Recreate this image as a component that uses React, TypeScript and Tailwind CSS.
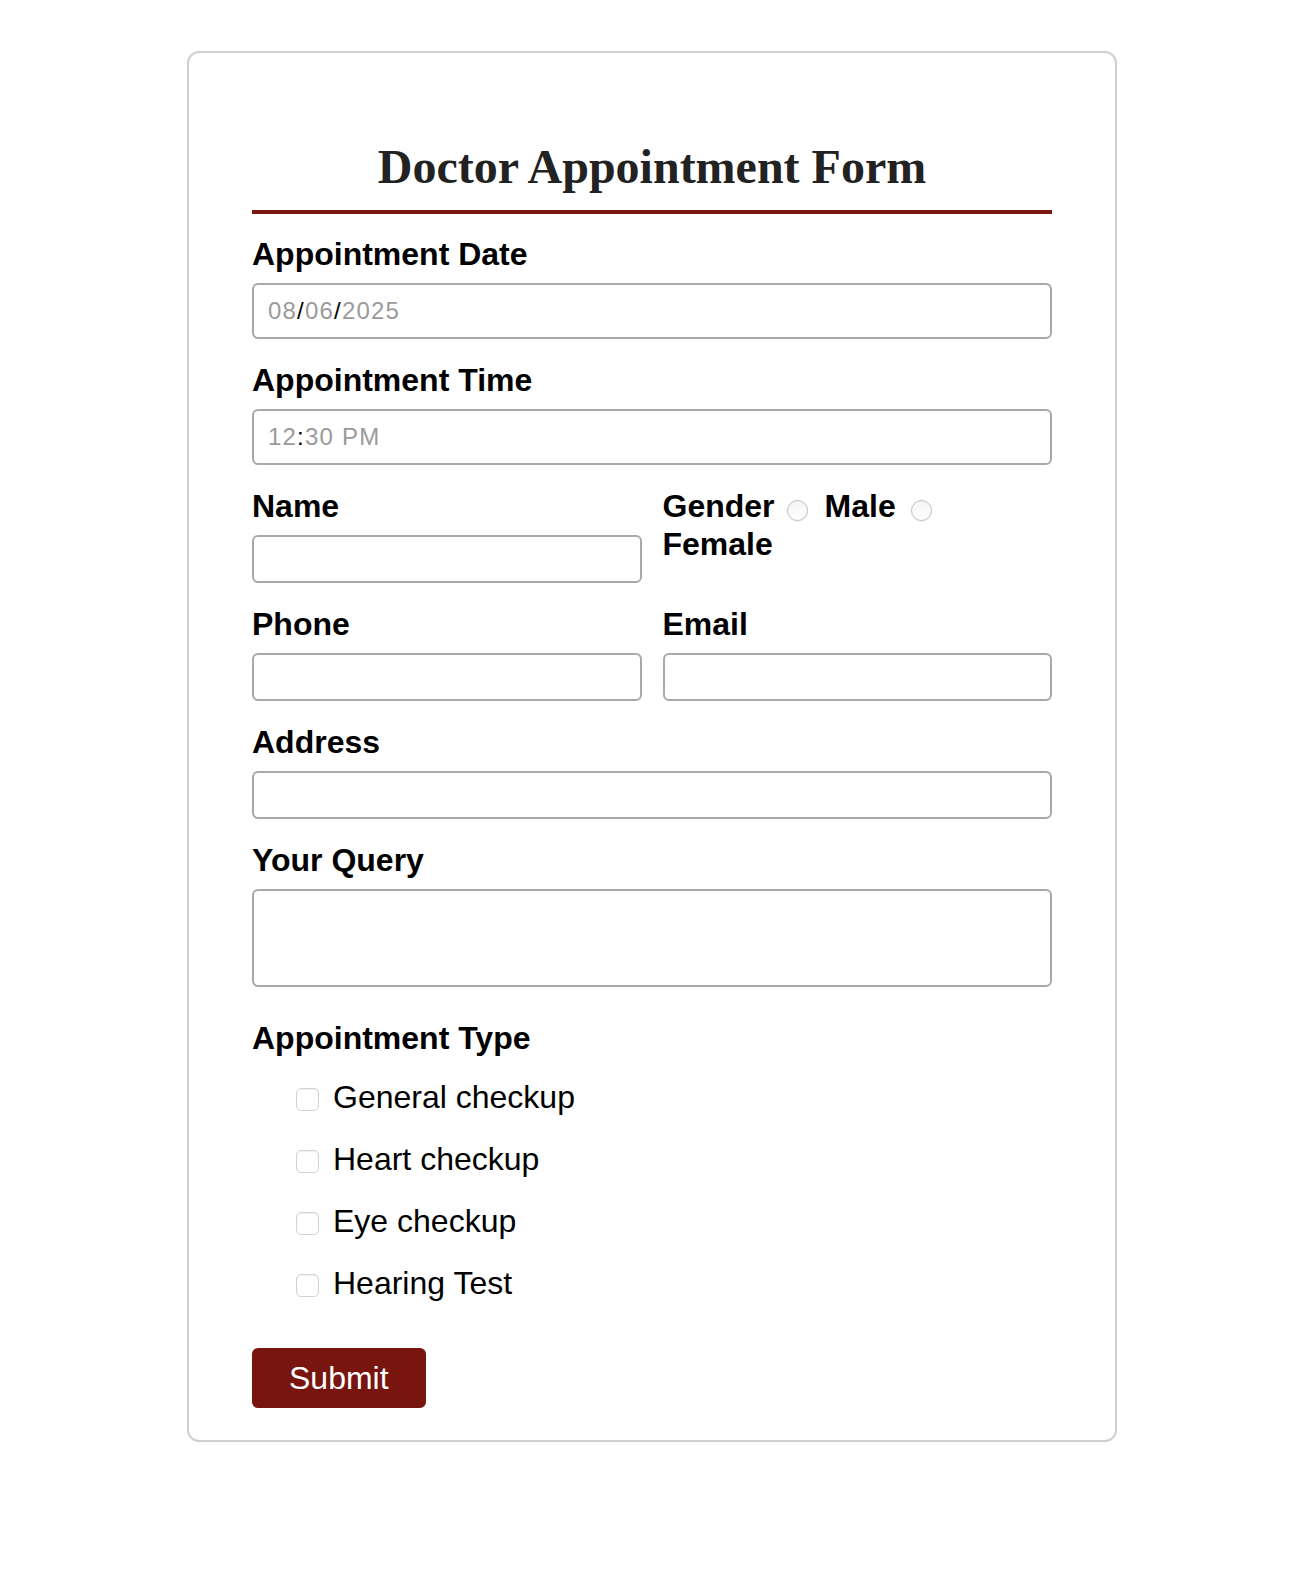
import React from "react";

function Label({ children }: { children: React.ReactNode }) {
  return <div className="text-[32px] leading-[38px] font-bold text-black">{children}</div>;
}

function Radio({ className }: { className: string }) {
  return (
    <div
      role="radio"
      aria-checked="false"
      className={`shrink-0 w-[21px] h-[21px] rounded-full border border-[#bdbdbd] bg-linear-to-b from-[#f4f4f4] to-white shadow-[0_1px_1px_rgba(0,0,0,0.06)] ${className}`}
    />
  );
}

function Check({ label }: { label: string }) {
  return (
    <div className="flex items-start h-[38px]">
      <div
        role="checkbox"
        aria-checked="false"
        className="shrink-0 ml-[44px] mt-[10px] w-[23px] h-[23px] rounded-[5px] border border-[#d2d2d2] bg-white shadow-[inset_0_1px_2px_rgba(0,0,0,0.06)]"
      />
      <span className="ml-[14px] text-[32px] leading-[38px] text-black">{label}</span>
    </div>
  );
}

const inputBox = "w-full border-2 border-[#a9a9a9] rounded-[6px] bg-white";

export default function App() {
  return (
    <div className="min-h-[1582px] bg-white pt-[51px] [font-family:'Liberation_Sans',Arial,Helvetica,sans-serif]">
      <div className="ml-[187px] w-[930px] border-2 border-[#cfcfcf] rounded-[12px] px-[63px] pt-[85px] pb-[32px]">
        <h1 className="text-center text-[48px] leading-[58px] font-bold text-[#222] [font-family:'Liberation_Serif','Times_New_Roman',serif]">
          Doctor Appointment Form
        </h1>
        <div className="mt-[14px] h-[4px] bg-[#7a1610]" />

        <div className="mt-[21px]">
          <Label>Appointment Date</Label>
          <div className={`${inputBox} mt-[10px] h-[56px] flex items-center pl-[14px] text-[24px] tracking-[1.2px] text-[#9a9a9a]`}>
            <span>08</span>
            <span className="text-black">/</span>
            <span>06</span>
            <span className="text-black">/</span>
            <span>2025</span>
          </div>
        </div>

        <div className="mt-[22px]">
          <Label>Appointment Time</Label>
          <div className={`${inputBox} mt-[10px] h-[56px] flex items-center pl-[14px] text-[24px] tracking-[1.2px] text-[#9a9a9a]`}>
            <span>12</span>
            <span className="text-black">:</span>
            <span>30 PM</span>
          </div>
        </div>

        <div className="mt-[22px] grid grid-cols-2 gap-x-[21px]">
          <div>
            <Label>Name</Label>
            <input type="text" className={`${inputBox} mt-[10px] h-[48px] block`} />
          </div>
          <div className="self-start flex flex-wrap content-start items-start text-[32px] leading-[38px] font-bold text-black">
            <span>Gender</span>
            <Radio className="ml-[12px] mr-[17px] mt-[13px]" />
            <span>Male</span>
            <Radio className="ml-[15px] mr-[19px] mt-[13px]" />
            <span>Female</span>
          </div>
        </div>

        <div className="mt-[22px] grid grid-cols-2 gap-x-[21px]">
          <div>
            <Label>Phone</Label>
            <input type="text" className={`${inputBox} mt-[10px] h-[48px] block`} />
          </div>
          <div>
            <Label>Email</Label>
            <input type="text" className={`${inputBox} mt-[10px] h-[48px] block`} />
          </div>
        </div>

        <div className="mt-[22px]">
          <Label>Address</Label>
          <input type="text" className={`${inputBox} mt-[10px] h-[48px] block`} />
        </div>

        <div className="mt-[22px]">
          <Label>Your Query</Label>
          <textarea className={`${inputBox} mt-[10px] h-[98px] block resize-none`} />
        </div>

        <div className="mt-[32px]">
          <Label>Appointment Type</Label>
          <div className="mt-[21px] flex flex-col gap-[24px]">
            <Check label="General checkup" />
            <Check label="Heart checkup" />
            <Check label="Eye checkup" />
            <Check label="Hearing Test" />
          </div>
        </div>

        <button
          type="button"
          className="mt-[46px] block h-[60px] px-[37px] rounded-[6px] bg-[#78150f] text-white text-[32px] leading-[60px]"
        >
          Submit
        </button>
      </div>
    </div>
  );
}
